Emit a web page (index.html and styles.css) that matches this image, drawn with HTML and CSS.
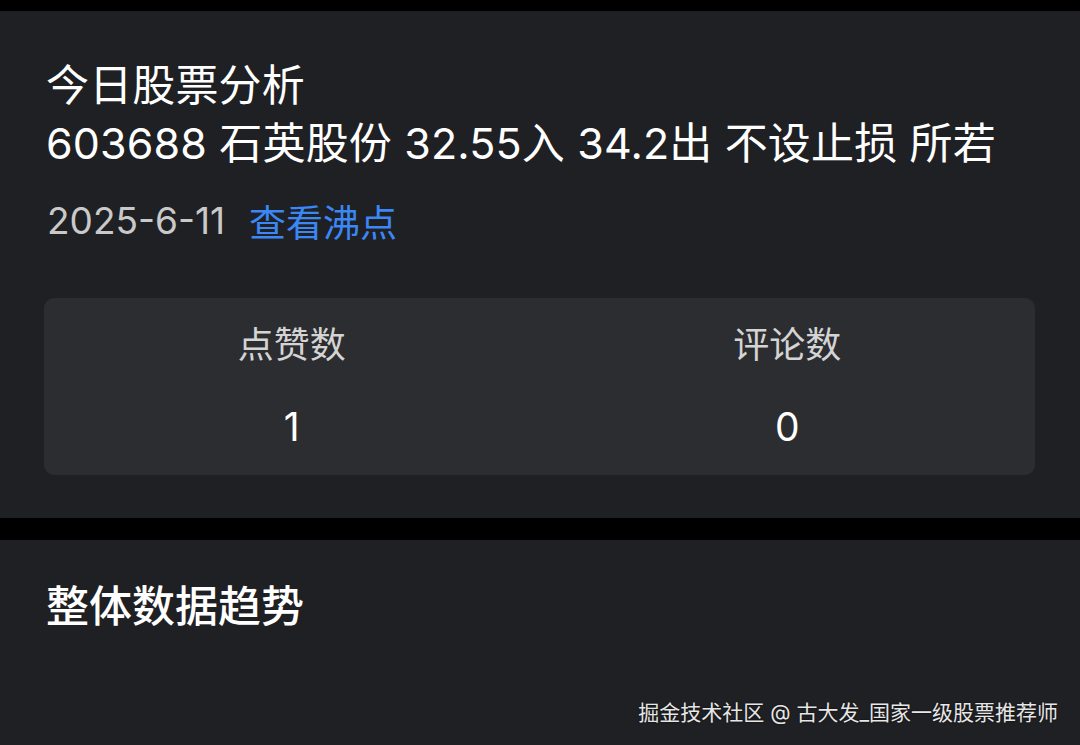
FILE: index.html
```html
<!DOCTYPE html>
<html lang="zh">
<head>
<meta charset="utf-8">
<link rel="stylesheet" href="styles.css">
</head>
<body>
<div class="page">
  <section class="card card-post">
    <div class="post-text">今日股票分析<br>603688 石英股份 32.55入 34.2出 不设止损 所若</div>
    <div class="meta"><span class="date">2025-6-11</span><a class="link">查看沸点</a></div>
    <div class="stats">
      <div class="stat">
        <div class="stat-label">点赞数</div>
        <div class="stat-value">1</div>
      </div>
      <div class="stat">
        <div class="stat-label">评论数</div>
        <div class="stat-value">0</div>
      </div>
    </div>
  </section>
  <section class="card card-trend">
    <h2 class="trend-title">整体数据趋势</h2>
  </section>
  <div class="watermark">掘金技术社区 @ 古大发_国家一级股票推荐师</div>
</div>
</body>
</html>
```

FILE: styles.css
```css
* { box-sizing: border-box; }
html, body { margin: 0; padding: 0; background: #000; }
body {
  width: 1080px;
  height: 745px;
  overflow: hidden;
  font-family: "Inter", "Noto Sans CJK SC", "Noto Sans", sans-serif;
  color: #fff;
}
.page {
  position: relative;
  height: 745px;
  padding-top: 11px;
  display: flex;
  flex-direction: column;
  gap: 22px;
}
.card {
  background: #1f2023;
}
.card-post {
  padding: 45px 45px 43px 44px;
}
.post-text {
  font-size: 43px;
  line-height: 58px;
  padding-left: 2px;
  color: #fff;
  letter-spacing: 0.15px;
}
.meta {
  margin-top: 25px;
  font-size: 37px;
  line-height: 48px;
  display: flex;
  gap: 24px;
  padding-left: 3px;
}
.date { color: #c9c9c9; }
.link { color: #3a87f5; font-family: "Noto Sans CJK SC", sans-serif; }
.stats {
  margin-top: 53px;
  background: #2c2d30;
  border-radius: 10px;
  display: grid;
  grid-template-columns: 1fr 1fr;
  padding: 23px 0 24px;
}
.stat {
  display: flex;
  flex-direction: column;
  align-items: center;
  gap: 34px;
}
.stat-label {
  font-size: 36px;
  line-height: 48px;
  color: #d4d4d4;
}
.stat-value {
  font-size: 39px;
  line-height: 48px;
  color: #fff;
}
.card-trend {
  flex: 1;
  padding: 38px 46px 0;
}
.trend-title {
  margin: 0;
  font-size: 43px;
  line-height: 56px;
  font-weight: 500;
  color: #fff;
}
.watermark {
  position: absolute;
  right: 22px;
  bottom: 18px;
  font-size: 21px;
  line-height: 28px;
  color: #e6e6e6;
  text-shadow: 0 0 2px rgba(0,0,0,0.8);
}
```
